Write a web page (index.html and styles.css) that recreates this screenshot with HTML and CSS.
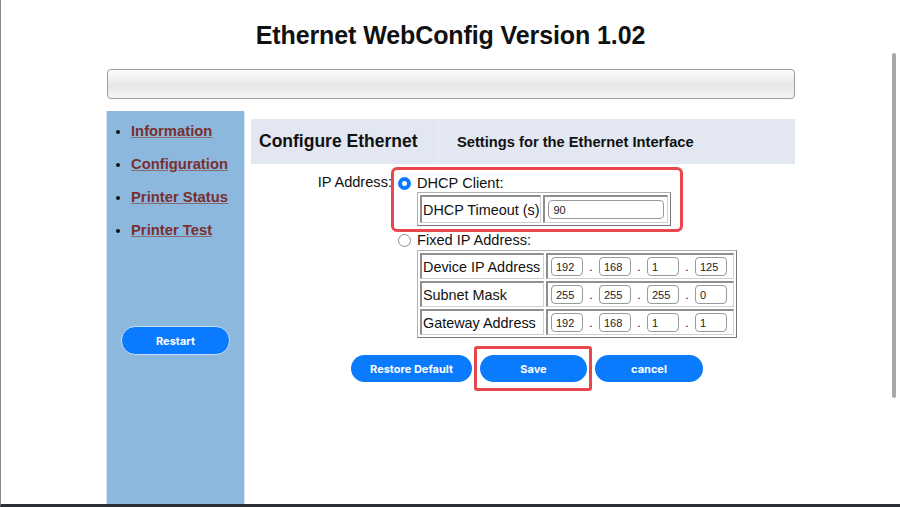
FILE: index.html
```html
<!DOCTYPE html>
<html lang="en">

<head>
    <meta charset="utf-8">
    <title>Ethernet WebConfig</title>
    <link rel="stylesheet" href="styles.css">
</head>

<body>
    <div id="page">
        <h1 class="title">Ethernet WebConfig Version 1.02</h1>
        <div class="top-bar"></div>

        <div class="layout">
            <div class="sidebar">
                <ul class="nav">
                    <li><a href="#">Information</a></li>
                    <li><a href="#">Configuration</a></li>
                    <li><a href="#">Printer Status</a></li>
                    <li><a href="#">Printer Test</a></li>
                </ul>
                <button class="btn restart">Restart</button>
            </div>

            <div class="main">
                <div class="band">
                    <div class="band-title">Configure Ethernet</div>
                    <div class="band-sub">Settings for the Ethernet Interface</div>
                </div>

                <div class="form-row">
                    <div class="form-label">IP Address:</div>
                    <div class="options">
                        <div class="option highlight">
                            <label class="radio-line">
                                <span class="radio checked"></span>DHCP Client:
                            </label>
                            <table class="inset dhcp">
                                <tr>
                                    <td class="cell-label">DHCP Timeout (s)</td>
                                    <td class="cell-input"><input class="field wide" value="90"></td>
                                </tr>
                            </table>
                        </div>

                        <div class="option plain">
                            <label class="radio-line">
                                <span class="radio"></span>Fixed IP Address:
                            </label>
                            <table class="inset fixed">
                                <tr>
                                    <td class="cell-label">Device IP Address</td>
                                    <td class="cell-input">
                                        <div class="ip">
                                            <input class="field" value="192"><span>.</span>
                                            <input class="field" value="168"><span>.</span>
                                            <input class="field" value="1"><span>.</span>
                                            <input class="field" value="125">
                                        </div>
                                    </td>
                                </tr>
                                <tr>
                                    <td class="cell-label">Subnet Mask</td>
                                    <td class="cell-input">
                                        <div class="ip">
                                            <input class="field" value="255"><span>.</span>
                                            <input class="field" value="255"><span>.</span>
                                            <input class="field" value="255"><span>.</span>
                                            <input class="field" value="0">
                                        </div>
                                    </td>
                                </tr>
                                <tr>
                                    <td class="cell-label">Gateway Address</td>
                                    <td class="cell-input">
                                        <div class="ip">
                                            <input class="field" value="192"><span>.</span>
                                            <input class="field" value="168"><span>.</span>
                                            <input class="field" value="1"><span>.</span>
                                            <input class="field" value="1">
                                        </div>
                                    </td>
                                </tr>
                            </table>
                        </div>
                    </div>
                </div>

                <div class="actions">
                    <button class="btn restore">Restore Default</button>
                    <span class="save-wrap"><button class="btn save">Save</button></span>
                    <button class="btn cancel">cancel</button>
                </div>
            </div>
        </div>
        <div class="scrollbar"></div>
    </div>
</body>

</html>
```

FILE: styles.css
```css
* {
    box-sizing: border-box;
}

html,
body {
    margin: 0;
    height: 100%;
    overflow: hidden;
    background-color: #ffffff;
}

#page {
    position: relative;
    height: 507px;
    border-left: 1px solid #8a8a8a;
    border-bottom: 3px solid #2b2f35;
    display: flex;
    flex-direction: column;
    font-family: "Liberation Sans", Arial, sans-serif;
    color: #111;
}

.title {
    margin: 21px 0 0 0;
    text-align: center;
    font-size: 25px;
    line-height: 28px;
    font-weight: bold;
    letter-spacing: -0.1px;
}

.top-bar {
    margin: 20px 0 0 106px;
    width: 688px;
    height: 30px;
    border: 1px solid #9c9c9c;
    border-radius: 4px;
    background: linear-gradient(#fdfdfd, #e6e6e6 55%, #f4f4f4);
    box-shadow: inset 0 1px 0 #ffffff;
}

.layout {
    flex: 1;
    display: flex;
    gap: 6px;
    margin: 12px 0 0 105px;
    min-height: 0;
}

/* left menu */
.sidebar {
    width: 139px;
    background-color: #8cb8de;
    border-left: 1px solid #d4e4f3;
    border-right: 1px solid #d4e4f3;
    display: flex;
    flex-direction: column;
    align-items: center;
}

.nav {
    align-self: stretch;
    margin: 11px 0 0 0;
    padding: 0 0 0 24px;
    list-style: disc;
}

.nav li {
    font-size: 14.8px;
    line-height: 19px;
    font-weight: bold;
    margin-bottom: 14px;
}

.nav a {
    color: #7a2f2f;
    text-decoration: underline;
    text-decoration-color: #8a6a6a;
}

.btn {
    background-color: #0a7bff;
    color: #ffffff;
    border: none;
    border-radius: 14px;
    font-family: Inter, Roboto, sans-serif;
    font-weight: 700;
    font-size: 11px;
    cursor: pointer;
}

.restart {
    margin-top: 72px;
    width: 109px;
    height: 29px;
    border: 1px solid #c9defa;
}

/* right side */
.main {
    width: 544px;
    padding-top: 8px;
}

.band {
    display: flex;
    height: 45px;
    background-color: #e3e7f1;
}

.band-title {
    width: 188px;
    padding-left: 8px;
    border-right: 1px solid #eceff6;
    display: flex;
    align-items: center;
    font-size: 17.5px;
    font-weight: bold;
}

.band-sub {
    padding-left: 18px;
    display: flex;
    align-items: center;
    font-size: 14.7px;
    font-weight: bold;
}

.form-row {
    display: flex;
    margin-top: 3px;
    font-size: 14.6px;
}

.form-label {
    width: 141px;
    text-align: right;
    padding-top: 7px;
}

.options {
    display: flex;
    flex-direction: column;
    margin-left: -1px;
}

.option {
    display: flex;
    flex-direction: column;
    align-items: flex-start;
}

.highlight {
    width: 292px;
    border: 3px solid #e9474b;
    border-radius: 6px;
    padding: 4px 0 3px 4px;
}

.plain {
    margin-top: -1px;
    padding-left: 7px;
}

.radio-line {
    display: flex;
    align-items: center;
    height: 18px;
    line-height: 18px;
}

.radio {
    width: 13px;
    height: 13px;
    border-radius: 50%;
    border: 1px solid #8d8d8d;
    background: #fff;
    margin-right: 6px;
}

.radio.checked {
    border: 4px solid #0a7bff;
}

/* bordered tables */
.inset {
    margin: 1px 0 0 19px;
    border: 1px solid #b0b0b0;
    border-right-color: #777;
    border-bottom-color: #777;
    border-spacing: 2px;
    font-size: 14.4px;
}

.inset td {
    border: 1px solid #d0d0d0;
    border-top: 2px solid #8f8f8f;
    border-left: 2px solid #8f8f8f;
    padding: 0 1px 0 1px;
    white-space: nowrap;
}

.dhcp {
    margin-top: 0;
}

.dhcp td {
    height: 28px;
}

.dhcp .cell-input {
    width: 125px;
    padding: 0 3px 0 3px;
}

.fixed td {
    height: 26px;
}

.fixed .cell-label {
    width: 124px;
}

.fixed .cell-input {
    width: 188px;
    padding: 0 3px 0 3px;
}

.field {
    width: 32px;
    height: 19px;
    border: 1px solid #9a9a9a;
    border-radius: 4px;
    padding: 0 4px;
    font-family: "Liberation Sans", Arial, sans-serif;
    font-size: 11px;
    color: #222;
    background: #fff;
}

.field.wide {
    width: 116px;
}

.ip {
    display: flex;
    align-items: center;
}

.ip span {
    width: 16px;
    text-align: center;
    font-size: 12px;
}

.actions {
    display: flex;
    align-items: center;
    margin: 17px 0 0 100px;
    gap: 8px;
}

.actions .btn {
    height: 27px;
}

.restore {
    width: 121px;
}

.save {
    width: 107px;
}

.cancel {
    width: 108px;
}

.save-wrap {
    display: inline-flex;
    border: 3px solid #e9474b;
    border-radius: 3px;
    padding: 6px 2px 6px 3px;
    margin: -9px -5px -9px -6px;
}

.scrollbar {
    position: absolute;
    left: 891px;
    top: 53px;
    width: 4px;
    height: 345px;
    border-radius: 2px;
    background-color: #a8a8a8;
}
```
